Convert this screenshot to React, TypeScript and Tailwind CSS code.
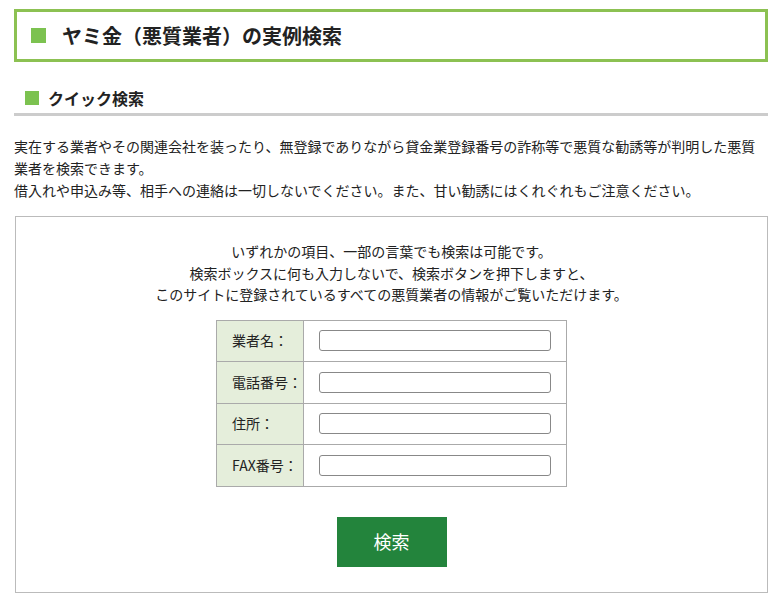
const FONT = { fontFamily: '"Noto Sans CJK JP", "Noto Sans", sans-serif' };

const fields = ["業者名：", "電話番号：", "住所：", "FAX番号："];

export default function App() {
  return (
    <div className="min-h-screen bg-white px-[14px] pt-[9px] text-[#222]" style={FONT}>
      {/* ページタイトル */}
      <h1 className="flex h-[53px] items-center border-[3px] border-[#8cc152] pl-[14px]">
        <span className="mr-[16px] h-[15px] w-[15px] bg-[#7cc250]" />
        <span className="text-[20px] font-bold leading-none">ヤミ金（悪質業者）の実例検索</span>
      </h1>

      {/* クイック検索 */}
      <h2 className="mt-[20px] flex h-[34px] items-center border-b-[3px] border-[#cccccc] pl-[11px]">
        <span className="mr-[9px] h-[14px] w-[14px] bg-[#7cc250]" />
        <span className="text-[16px] font-bold leading-none">クイック検索</span>
      </h2>

      <p className="mt-[19px] text-[14px] leading-[22px]">
        実在する業者やその関連会社を装ったり、無登録でありながら貸金業登録番号の詐称等で悪質な勧誘等が判明した悪質業者を検索できます。
        <br />
        借入れや申込み等、相手への連絡は一切しないでください。また、甘い勧誘にはくれぐれもご注意ください。
      </p>

      <div className="mt-[15px] ml-px border border-[#bbbbbb] pt-[24px] pb-[25px]">
        <p className="text-center text-[14px] leading-[21.5px]">
          いずれかの項目、一部の言葉でも検索は可能です。
          <br />
          検索ボックスに何も入力しないで、検索ボタンを押下しますと、
          <br />
          このサイトに登録されているすべての悪質業者の情報がご覧いただけます。
        </p>

        <table className="mx-auto mt-[14px] w-[351px] border-collapse">
          <tbody>
            {fields.map((f) => (
              <tr key={f} className="h-[41.5px]">
                <th className="w-[87px] border border-[#aaaaaa] bg-[#e5eedb] pl-[15px] text-left text-[14px] font-normal">
                  {f}
                </th>
                <td className="border border-[#aaaaaa] pl-[15px]">
                  <input
                    type="text"
                    className="block h-[21px] w-[232px] rounded-[3px] border border-[#888888] bg-white"
                  />
                </td>
              </tr>
            ))}
          </tbody>
        </table>

        <div className="mt-[30px] flex justify-center">
          <button className="h-[50px] w-[110px] bg-[#23843c] text-[18px] text-white">検索</button>
        </div>
      </div>
    </div>
  );
}
